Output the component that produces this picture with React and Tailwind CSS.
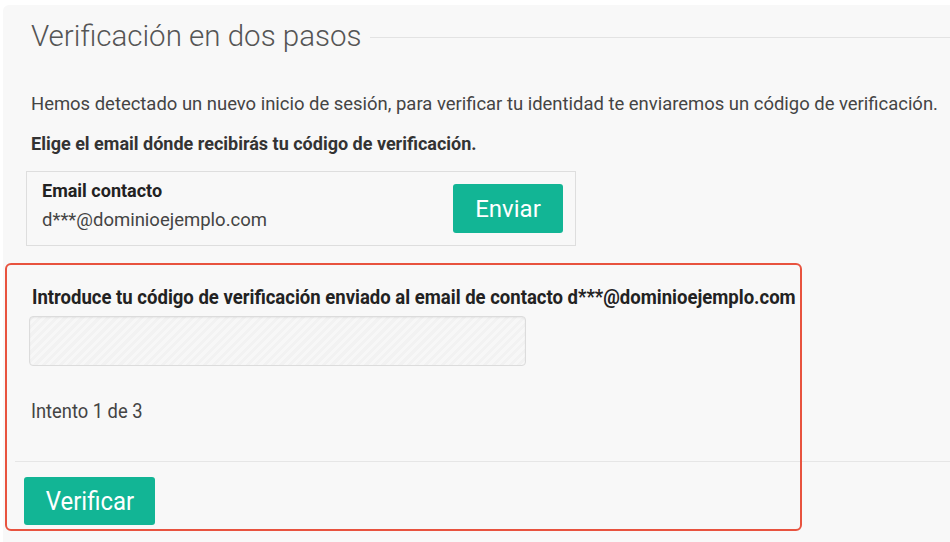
import React from "react";

export default function App() {
  return (
    <div className="w-[950px] h-[542px] bg-white overflow-hidden" style={{ fontFamily: "Roboto, 'Liberation Sans', sans-serif" }}>
      <div className="relative ml-[3px] mt-[5px] h-[537px] rounded-tl-[6px] bg-[#f8f8f8]">
        <div className="flex items-center pl-[28px] pt-[11px]">
          <h1 className="text-[29.5px] leading-[40px] font-light text-[#555] whitespace-nowrap">Verificación en dos pasos</h1>
          <div className="ml-[9px] mt-[2px] h-px flex-1 bg-[#e3e3e3]" />
        </div>
        <p className="ml-[28px] mt-[37px] text-[18.45px] leading-[22px] text-[#444] whitespace-nowrap">
          Hemos detectado un nuevo inicio de sesión, para verificar tu identidad te enviaremos un código de verificación.
        </p>
        <p className="ml-[28px] mt-[18px] text-[18px] leading-[22px] font-bold text-[#333] whitespace-nowrap">
          Elige el email dónde recibirás tu código de verificación.
        </p>
        <div className="ml-[23px] mt-[16px] flex h-[75px] w-[550px] justify-between border border-[#dedede] pl-[15px] pr-[12px]">
          <div className="flex flex-col pt-[7px]">
            <span className="text-[18px] leading-[24px] font-bold text-[#222]">Email contacto</span>
            <span className="mt-[5px] text-[18.5px] leading-[24px] text-[#444]">d***@dominioejemplo.com</span>
          </div>
          <button className="self-center h-[49px] w-[110px] rounded-[3px] bg-[#12b595] text-[24px] text-white">Enviar</button>
        </div>
        <div className="ml-[29px] mt-[40px] text-[19.5px] leading-[24px] font-bold text-[#222] origin-left scale-x-[0.95] whitespace-nowrap">
          Introduce tu código de verificación enviado al email de contacto d***@dominioejemplo.com
        </div>
        <div
          className="ml-[26px] mt-[6px] h-[50px] w-[497px] rounded-[4px] border border-[#dcdcdc] shadow-[inset_0_1px_2px_rgba(0,0,0,0.06)]"
          style={{ backgroundImage: "repeating-linear-gradient(135deg, #f2f2f2 0px, #f2f2f2 3px, #f7f7f7 3px, #f7f7f7 6px)" }}
        />
        <div className="ml-[28px] mt-[34px] text-[19.5px] leading-[24px] text-[#444] origin-left scale-x-[0.94] whitespace-nowrap">Intento 1 de 3</div>
        <div className="ml-[12px] mt-[37px] h-px bg-[#e6e6e6]" />
        <button className="ml-[21px] mt-[15px] h-[48px] w-[131px] rounded-[3px] bg-[#12b595] text-[26px] text-white">
          <span className="inline-block scale-x-[0.92]">Verificar</span>
        </button>
        <div className="absolute left-[2px] top-[258px] h-[268px] w-[797px] rounded-[6px] border-2 border-[#e8533f] pointer-events-none" />
      </div>
    </div>
  );
}
